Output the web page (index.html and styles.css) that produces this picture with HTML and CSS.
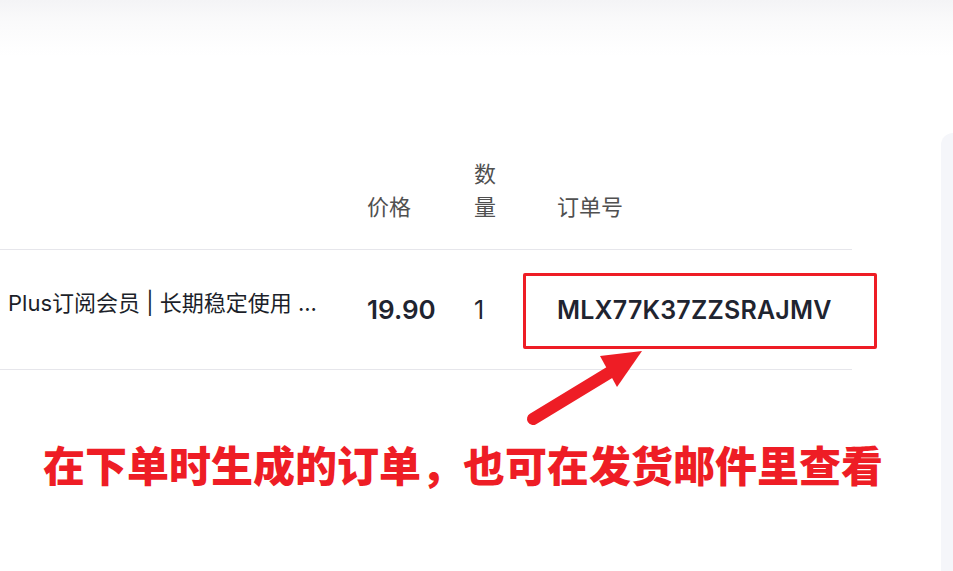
FILE: index.html
```html
<!DOCTYPE html>
<html lang="zh-CN">
<head>
<meta charset="utf-8">
<title>订单</title>
<link rel="stylesheet" href="styles.css">
</head>
<body>
<div class="topbar"></div>
<div class="content">
  <div class="main">
    <table class="orders">
      <colgroup>
        <col class="c-name">
        <col class="c-price">
        <col class="c-qty">
        <col class="c-no">
      </colgroup>
      <thead>
        <tr>
          <th class="name"></th>
          <th class="price">价格</th>
          <th class="qty">数量</th>
          <th class="no">订单号</th>
        </tr>
      </thead>
      <tbody>
        <tr>
          <td class="name">Plus订阅会员 | 长期稳定使用 ...</td>
          <td class="price">19.90</td>
          <td class="qty">1</td>
          <td class="no">MLX77K37ZZSRAJMV</td>
        </tr>
      </tbody>
    </table>
    <div class="highlight"></div>
    <svg class="arrow" width="130" height="90" viewBox="0 0 130 90">
      <line x1="13" y1="79" x2="92" y2="31" stroke="#ee1d25" stroke-width="12" stroke-linecap="round"/>
      <polygon points="80,16 122,11 97,47" fill="#ee1d25"/>
    </svg>
    <p class="note">在下单时生成的订单，也可在发货邮件里查看</p>
  </div>
  <aside class="side"></aside>
</div>
</body>
</html>
```

FILE: styles.css
```css
html, body {
  margin: 0;
  padding: 0;
  height: 100%;
  overflow: hidden;
  background: #ffffff;
  font-family: Inter, "Noto Sans CJK SC", sans-serif;
}

.topbar {
  height: 56px;
  background: linear-gradient(to bottom, #f4f4f6 0%, #fafafb 40%, #ffffff 100%);
}

.content {
  display: flex;
  height: calc(100% - 56px);
}

.main {
  position: relative;
  width: 852px;
  flex: none;
  padding-top: 86px;
}

.orders {
  width: 852px;
  border-collapse: collapse;
  table-layout: fixed;
}

.c-name { width: 351px; }
.c-price { width: 107px; }
.c-qty { width: 68px; }
.c-no { width: 326px; }

.orders th {
  font-weight: 400;
  font-size: 22px;
  line-height: 33px;
  color: #505050;
  text-align: left;
  vertical-align: bottom;
  padding: 16px 16px 25px 16px;
  border-bottom: 1px solid #e6e6eb;
}

.orders th.qty {
  padding-right: 14px;
}

.orders td {
  height: 120px;
  padding: 0 16px;
  box-sizing: border-box;
  vertical-align: middle;
  color: #1f2430;
  border-bottom: 1px solid #e6e6eb;
  white-space: nowrap;
  overflow: hidden;
}

.orders .name { padding-left: 8px; }
.orders .no { padding-left: 31px; }

.orders td.name {
  font-size: 22px;
  color: #1c1f2a;
  padding-bottom: 18px;
}

.orders td.price {
  font-size: 26px;
  font-weight: 600;
}

.orders td.qty {
  font-size: 25px;
  font-weight: 400;
}

.orders td.no {
  font-size: 25px;
  font-weight: 600;
  letter-spacing: 0.2px;
}

.highlight {
  position: absolute;
  left: 523px;
  top: 217px;
  width: 354px;
  height: 76px;
  box-sizing: border-box;
  border: 3px solid #ee1d25;
  border-radius: 2px;
}

.arrow {
  position: absolute;
  left: 520px;
  top: 284px;
}

.note {
  margin: 72px 0 0 43px;
  font-size: 42px;
  line-height: 44px;
  font-weight: 900;
  color: #ee1d25;
  white-space: nowrap;
  font-family: "Noto Sans CJK SC", sans-serif;
}

.side {
  flex: 1;
  margin-left: 89px;
  margin-top: 77px;
  background: #f5f6fa;
  border-radius: 12px 0 0 0;
}
```
